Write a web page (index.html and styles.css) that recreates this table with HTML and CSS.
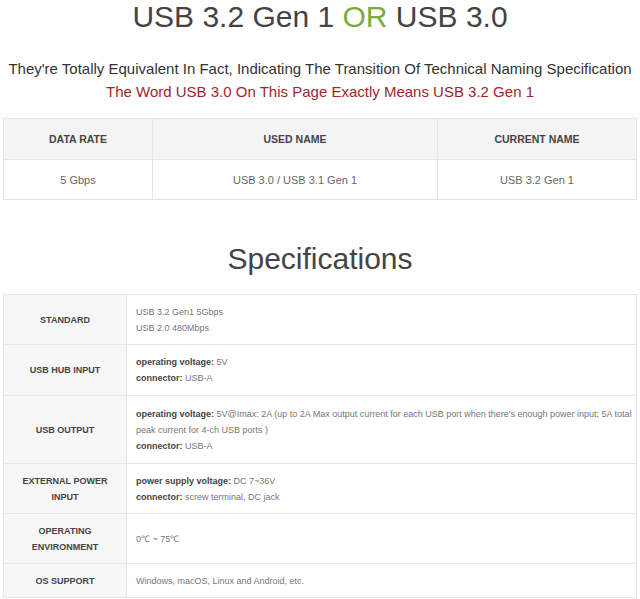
FILE: index.html
```html
<!DOCTYPE html>
<html lang="en">
<head>
    <meta charset="UTF-8">
    <meta name="viewport" content="width=device-width, initial-scale=1.0">
    <title>USB 3.2 Gen 1 Specifications</title>
    <link rel="stylesheet" href="styles.css">
</head>
<body>
    <div class="page">
        <h1 class="title">USB 3.2 Gen 1 <span class="accent">OR</span> USB 3.0</h1>
        <p class="intro">They're Totally Equivalent In Fact, Indicating The Transition Of Technical Naming Specification</p>
        <p class="note">The Word USB 3.0 On This Page Exactly Means USB 3.2 Gen 1</p>

        <table class="names">
            <tr>
                <th class="col-rate">DATA RATE</th>
                <th class="col-used">USED NAME</th>
                <th>CURRENT NAME</th>
            </tr>
            <tr>
                <td>5 Gbps</td>
                <td>USB 3.0 / USB 3.1 Gen 1</td>
                <td>USB 3.2 Gen 1</td>
            </tr>
        </table>

        <h2 class="section-title">Specifications</h2>

        <table class="specs">
            <tr class="row-std">
                <th>STANDARD</th>
                <td>USB 3.2 Gen1 5Gbps<br>USB 2.0 480Mbps</td>
            </tr>
            <tr class="row-hub">
                <th>USB HUB INPUT</th>
                <td><strong>operating voltage:</strong> 5V<br><strong>connector:</strong> USB-A</td>
            </tr>
            <tr class="row-out">
                <th>USB OUTPUT</th>
                <td><strong>operating voltage:</strong> 5V@Imax: 2A (up to 2A Max output current for each USB port when there's enough power input; 5A total peak current for 4-ch USB ports )<br><strong>connector:</strong> USB-A</td>
            </tr>
            <tr class="row-ext">
                <th>EXTERNAL POWER<br>INPUT</th>
                <td><strong>power supply voltage:</strong> DC 7~36V<br><strong>connector:</strong> screw terminal, DC jack</td>
            </tr>
            <tr class="row-env">
                <th>OPERATING<br>ENVIRONMENT</th>
                <td>0℃ ~ 75℃</td>
            </tr>
            <tr class="row-os">
                <th>OS SUPPORT</th>
                <td>Windows, macOS, Linux and Android, etc.</td>
            </tr>
        </table>
    </div>
</body>
</html>
```
FILE: styles.css
```css
html, body {
    margin: 0;
    padding: 0;
    background: #fff;
    font-family: "Liberation Sans", Arial, sans-serif;
    color: #444;
}
.page {
    padding: 0 3px;
}
.title {
    margin: 0;
    font-size: 30px;
    font-weight: normal;
    line-height: 34px;
    text-align: center;
    color: #444;
}
.accent {
    color: #7aab3b;
}
.intro {
    margin: 23px 0 0;
    font-size: 15px;
    line-height: 23px;
    text-align: center;
    color: #333;
}
.note {
    margin: 0;
    font-size: 15px;
    line-height: 23px;
    text-align: center;
    color: #a0262b;
}
table {
    width: 100%;
    border-collapse: collapse;
}
.names {
    margin-top: 15px;
    border: 1px solid #e4e4e4;
}
.names th, .names td {
    padding: 0;
    border: 1px solid #e4e4e4;
    text-align: center;
    font-size: 11px;
}
.names th {
    height: 40px;
    background: #f4f4f4;
    font-size: 10.5px;
    font-weight: bold;
    color: #444;
}
.names td {
    height: 39px;
    color: #666;
}
.col-rate {
    width: 148px;
}
.col-used {
    width: 284px;
}
.section-title {
    margin: 41px 0 0;
    font-size: 30px;
    font-weight: normal;
    line-height: 36px;
    text-align: center;
    color: #444;
}
.specs {
    margin-top: 17px;
    border: 1px solid #e6e6e6;
}
.specs th, .specs td {
    padding: 0;
    border: 1px solid #e6e6e6;
    font-size: 9px;
    line-height: 16px;
}
.specs th {
    width: 122px;
    background: #f7f7f7;
    font-weight: bold;
    color: #444;
    text-align: center;
}
.specs td {
    padding: 0 2px 0 9px;
    text-align: left;
    color: #777;
}
.specs strong {
    color: #444;
}
.row-std td, .row-std th { height: 49px; }
.row-hub td, .row-hub th { height: 50px; }
.row-out td, .row-out th { height: 67px; }
.row-ext td, .row-ext th { height: 49px; }
.row-env td, .row-env th { height: 49px; }
.row-os td, .row-os th { height: 33px; }
```
